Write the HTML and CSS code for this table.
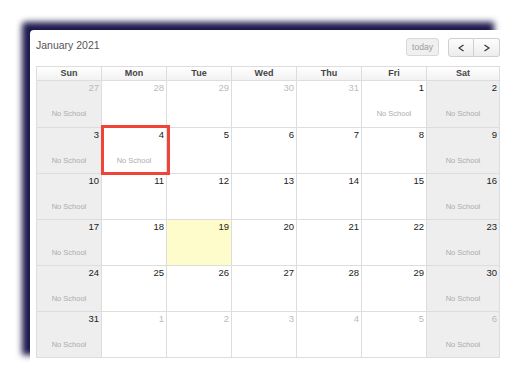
FILE: index.html
```html
<!DOCTYPE html>
<html lang="en">
<head>
    <meta charset="UTF-8">
    <title>School Calendar</title>
    <link rel="stylesheet" href="styles.css">
</head>
<body>
    <div class="panel">
        <!-- Toolbar -->
        <div class="toolbar">
            <h2 class="title">January 2021</h2>
            <div class="actions">
                <button class="btn btn-today" disabled>today</button>
                <div class="btn-group">
                    <button class="btn btn-nav" aria-label="prev">
                        <svg width="6" height="8" viewBox="0 0 6 8"><polyline points="5.5,1 1,4 5.5,7" /></svg>
                    </button>
                    <button class="btn btn-nav" aria-label="next">
                        <svg width="6" height="8" viewBox="0 0 6 8"><polyline points="0.5,1 5,4 0.5,7" /></svg>
                    </button>
                </div>
            </div>
        </div>

        <!-- Month grid -->
        <div class="month">
            <div class="head">Sun</div>
            <div class="head">Mon</div>
            <div class="head">Tue</div>
            <div class="head">Wed</div>
            <div class="head">Thu</div>
            <div class="head">Fri</div>
            <div class="head">Sat</div>

            <div class="day weekend other"><span class="num">27</span><span class="event">No School</span></div>
            <div class="day other"><span class="num">28</span></div>
            <div class="day other"><span class="num">29</span></div>
            <div class="day other"><span class="num">30</span></div>
            <div class="day other"><span class="num">31</span></div>
            <div class="day"><span class="num">1</span><span class="event">No School</span></div>
            <div class="day weekend"><span class="num">2</span><span class="event">No School</span></div>

            <div class="day weekend"><span class="num">3</span><span class="event">No School</span></div>
            <div class="day marked"><span class="num">4</span><span class="event">No School</span></div>
            <div class="day"><span class="num">5</span></div>
            <div class="day"><span class="num">6</span></div>
            <div class="day"><span class="num">7</span></div>
            <div class="day"><span class="num">8</span></div>
            <div class="day weekend"><span class="num">9</span><span class="event">No School</span></div>

            <div class="day weekend"><span class="num">10</span><span class="event">No School</span></div>
            <div class="day"><span class="num">11</span></div>
            <div class="day"><span class="num">12</span></div>
            <div class="day"><span class="num">13</span></div>
            <div class="day"><span class="num">14</span></div>
            <div class="day"><span class="num">15</span></div>
            <div class="day weekend"><span class="num">16</span><span class="event">No School</span></div>

            <div class="day weekend"><span class="num">17</span><span class="event">No School</span></div>
            <div class="day"><span class="num">18</span></div>
            <div class="day today"><span class="num">19</span></div>
            <div class="day"><span class="num">20</span></div>
            <div class="day"><span class="num">21</span></div>
            <div class="day"><span class="num">22</span></div>
            <div class="day weekend"><span class="num">23</span><span class="event">No School</span></div>

            <div class="day weekend"><span class="num">24</span><span class="event">No School</span></div>
            <div class="day"><span class="num">25</span></div>
            <div class="day"><span class="num">26</span></div>
            <div class="day"><span class="num">27</span></div>
            <div class="day"><span class="num">28</span></div>
            <div class="day"><span class="num">29</span></div>
            <div class="day weekend"><span class="num">30</span><span class="event">No School</span></div>

            <div class="day weekend"><span class="num">31</span><span class="event">No School</span></div>
            <div class="day other"><span class="num">1</span></div>
            <div class="day other"><span class="num">2</span></div>
            <div class="day other"><span class="num">3</span></div>
            <div class="day other"><span class="num">4</span></div>
            <div class="day other"><span class="num">5</span></div>
            <div class="day weekend other"><span class="num">6</span><span class="event">No School</span></div>
        </div>
    </div>
</body>
</html>
```

FILE: styles.css
```css
/* Base */
*,
*::before,
*::after {
    margin: 0;
    padding: 0;
    box-sizing: border-box;
}

body {
    font-family: 'Liberation Sans', Arial, sans-serif;
    background-color: #fff;
    color: #222;
    overflow: hidden;
}

/* Card with the dark offset shadow */
.panel {
    margin: 30px 0 0 30px;
    width: 472px;
    height: 333px;
    padding: 8px 2px 0 6px;
    background-color: #fff;
    border-top-left-radius: 4px;
    box-shadow: -8px -8px 6px #1e1a4c;
}

/* Toolbar */
.toolbar {
    display: flex;
    justify-content: space-between;
    align-items: flex-start;
    height: 19px;
    margin-bottom: 9px;
}

.title {
    font-size: 10.5px;
    font-weight: normal;
    color: #555;
    margin-top: 1px;
}

.actions {
    display: flex;
    gap: 9px;
}

.btn {
    font-family: inherit;
    display: flex;
    align-items: center;
    justify-content: center;
    height: 19px;
    border: 1px solid #cfcfcf;
    border-radius: 3px;
    background: linear-gradient(#fdfdfd, #ececec);
    color: #333;
}

.btn-today {
    width: 33px;
    height: 18px;
    font-size: 8.5px;
    color: #9a9a9a;
    background: #f0f0f0;
    border-color: #d8d8d8;
}

.btn-group {
    display: flex;
}

.btn-nav {
    width: 26px;
}

.btn-nav:first-child {
    border-radius: 3px 0 0 3px;
}

.btn-nav:last-child {
    border-left: none;
    border-radius: 0 3px 3px 0;
}

.btn-nav svg polyline {
    fill: none;
    stroke: #333;
    stroke-width: 1.2;
}

/* Month grid */
.month {
    display: grid;
    grid-template-columns: repeat(6, 65px) 73px;
    grid-template-rows: 14px 47px;
    grid-auto-rows: 46px;
    border-top: 1px solid #ddd;
    border-left: 1px solid #ddd;
    width: 464px;
}

.head,
.day {
    border-right: 1px solid #ddd;
    border-bottom: 1px solid #ddd;
}

.head {
    background: linear-gradient(#fff, #f2f2f2);
    font-size: 9px;
    font-weight: bold;
    color: #444;
    text-align: center;
    line-height: 12px;
}

.day {
    display: flex;
    flex-direction: column;
    position: relative;
    padding: 1px 2px 0 2px;
}

.num {
    font-size: 9.5px;
    line-height: 11px;
    text-align: right;
}

.event {
    font-size: 7.5px;
    line-height: 9px;
    color: #acacac;
    text-align: center;
    margin-top: 16px;
}

.weekend {
    background-color: #eee;
}

.other .num {
    color: #bbb;
}

.today {
    background-color: #fefccb;
}

/* highlight ring around a selected day */
.marked::after {
    content: '';
    position: absolute;
    left: -1px;
    top: -3px;
    width: 69px;
    height: 50px;
    border: 3px solid #f04438;
    z-index: 2;
}
```
